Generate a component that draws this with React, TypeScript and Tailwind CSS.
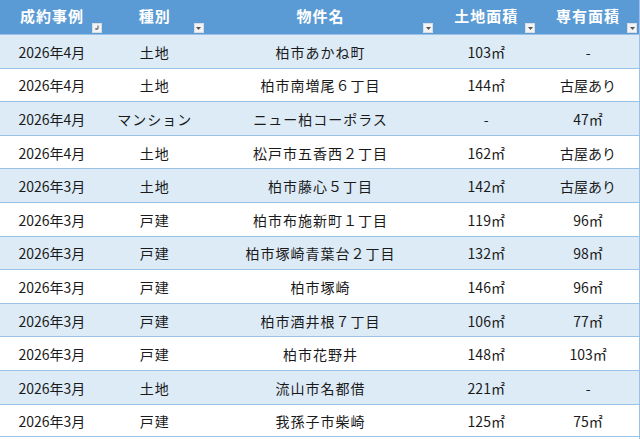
import { Fragment } from 'react'

const columns = [
  { label: '成約事例', width: 'w-[104px]', sort: true },
  { label: '種別', width: 'w-[102px]' },
  { label: '物件名', width: 'w-[230px]' },
  { label: '土地面積', width: 'w-[102px]' },
  { label: '専有面積', width: 'w-[102px]' },
]

const rows = [
  ['2026年4月', '土地', '柏市あかね町', '103㎡', '-'],
  ['2026年4月', '土地', '柏市南増尾６丁目', '144㎡', '古屋あり'],
  ['2026年4月', 'マンション', 'ニュー柏コーポラス', '-', '47㎡'],
  ['2026年4月', '土地', '松戸市五香西２丁目', '162㎡', '古屋あり'],
  ['2026年3月', '土地', '柏市藤心５丁目', '142㎡', '古屋あり'],
  ['2026年3月', '戸建', '柏市布施新町１丁目', '119㎡', '96㎡'],
  ['2026年3月', '戸建', '柏市塚崎青葉台２丁目', '132㎡', '98㎡'],
  ['2026年3月', '戸建', '柏市塚崎', '146㎡', '96㎡'],
  ['2026年3月', '戸建', '柏市酒井根７丁目', '106㎡', '77㎡'],
  ['2026年3月', '戸建', '柏市花野井', '148㎡', '103㎡'],
  ['2026年3月', '土地', '流山市名都借', '221㎡', '-'],
  ['2026年3月', '戸建', '我孫子市柴崎', '125㎡', '75㎡'],
]

function FilterButton({ sort }: { sort?: boolean }) {
  return (
    <span className="absolute bottom-[2px] right-[3px] flex h-[8px] w-[8px] items-center justify-center bg-[#f3f3f3] shadow-[0_0_0_1px_#d8dde3]">
      {sort ? (
        <svg width="6" height="6" viewBox="0 0 6 6">
          <path d="M4 0.5V4H1.5" stroke="#555" strokeWidth="1" fill="none" />
          <path d="M1 4L2.5 3V5Z" fill="#555" />
        </svg>
      ) : (
        <svg width="5" height="3" viewBox="0 0 5 3">
          <path d="M0 0H5L2.5 3Z" fill="#555" />
        </svg>
      )}
    </span>
  )
}

export default function App() {
  return (
    <div
      className="w-[640px] h-[439px] overflow-hidden bg-white border-r border-[#9bc2e6]"
      style={{ fontFamily: '"Noto Sans CJK JP", "Noto Sans", sans-serif' }}
    >
      {/* header */}
      <div className="flex h-[34px] bg-[#5b9bd5]">
        {columns.map((c) => (
          <div
            key={c.label}
            className={`${c.width} relative flex items-center justify-center pb-[1px] text-[15px] font-bold tracking-[1px] text-white`}
          >
            {c.label}
            <FilterButton sort={c.sort} />
          </div>
        ))}
      </div>

      {/* body */}
      {rows.map((r, i) => (
        <div
          key={i}
          className={`flex h-[33.6px] border-t border-[#9bc2e6] ${i === rows.length - 1 ? 'border-b' : ''} ${i % 2 === 0 ? 'bg-[#ddebf7]' : 'bg-white'}`}
        >
          {r.map((cell, j) => (
            <Fragment key={j}>
              <div
                className={`${columns[j].width} flex items-center justify-center pt-[2px] text-[14px] text-[#1a1a1a] ${j === 2 || j === 1 ? 'tracking-[1px]' : ''}`}
              >
                {cell}
              </div>
            </Fragment>
          ))}
        </div>
      ))}
    </div>
  )
}
